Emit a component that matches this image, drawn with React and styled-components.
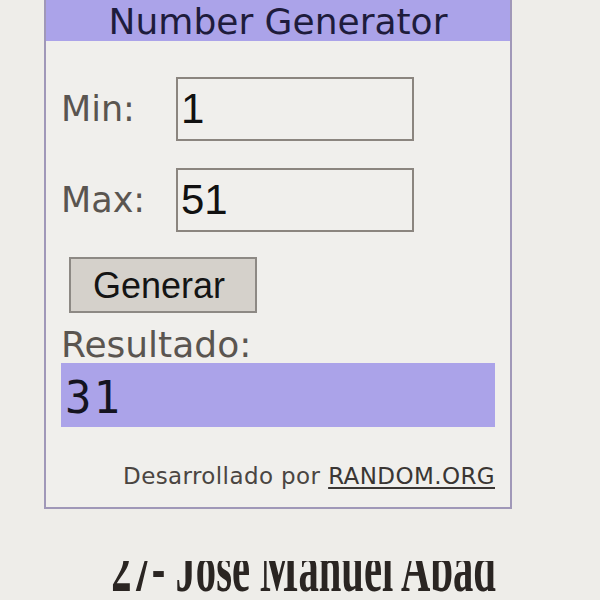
import React from "react";
import styled, { createGlobalStyle } from "styled-components";

const Global = createGlobalStyle`
  html, body {
    margin: 0;
    padding: 0;
    background: #eeede9;
    overflow: hidden;
  }
  * { box-sizing: border-box; }
`;

const Page = styled.div`
  width: 600px;
  height: 600px;
  display: flex;
  flex-direction: column;
`;

const Widget = styled.div`
  margin-left: 44px;
  width: 468px;
  background: #f0efec;
  border: 2px solid #a098b8;
  border-top: none;
  display: flex;
  flex-direction: column;
`;

const Header = styled.div`
  height: 41px;
  padding-top: 2px;
  background: #aba3e9;
  color: #1e1c3c;
  font-family: "DejaVu Sans", sans-serif;
  font-size: 36px;
  line-height: 39px;
  text-align: center;
`;

const Body = styled.div`
  display: flex;
  flex-direction: column;
  padding: 36px 15px 19px;
`;

const FieldRow = styled.div`
  display: flex;
  align-items: center;
  height: 64px;
  margin-top: ${(p) => p.$gap || 0}px;
`;

const Label = styled.span`
  flex: none;
  width: 115px;
  font-family: "DejaVu Sans", sans-serif;
  font-size: ${(p) => p.$size || 35}px;
  color: #5a5550;
`;

const Input = styled.input`
  width: 238px;
  height: 64px;
  border: 2px solid #8b857f;
  background: #f0efec;
  padding: 0 0 0 3px;
  font-family: "Liberation Sans", Arial, sans-serif;
  font-size: 42px;
  color: #111;
  outline: none;
`;

const Button = styled.button`
  align-self: flex-start;
  margin: 25px 0 0 8px;
  width: 188px;
  height: 56px;
  border: 2px solid #8d8984;
  background: #d5d1cb;
  padding: 2px 8px 0 0;
  font-family: "Liberation Sans", Arial, sans-serif;
  font-size: 36px;
  color: #141414;
`;

const ResultLabel = styled.div`
  margin-top: 14px;
  font-family: "DejaVu Sans", sans-serif;
  font-size: 36px;
  line-height: 36px;
  color: #5a5550;
`;

const ResultBox = styled.div`
  height: 64px;
  background: #aba3e9;
  display: flex;
  align-items: center;
  padding: 4px 0 0 4px;
  font-family: "DejaVu Sans Mono", monospace;
  font-size: 44px;
  letter-spacing: 2px;
  color: #141420;
`;

const Credit = styled.div`
  margin-top: 38px;
  text-align: right;
  font-family: "DejaVu Sans", sans-serif;
  font-size: 23px;
  line-height: 23px;
  letter-spacing: 0.4px;
  color: #4a4541;
`;

const CreditLink = styled.a`
  color: #3a3633;
  text-decoration: underline;
  text-underline-offset: 3px;
`;

const Caption = styled.div`
  margin-top: 52px;
  height: 32px;
  overflow: hidden;
  display: flex;
  justify-content: center;
  align-items: flex-end;
`;

const CaptionText = styled.span`
  display: block;
  margin: 0 0 -10px 8px;
  font-family: "Liberation Serif", "Times New Roman", serif;
  font-weight: bold;
  font-size: 70px;
  line-height: 1;
  color: #2a2522;
  white-space: nowrap;
  transform: scaleX(0.58);
`;

export default function App() {
  return (
    <Page>
      <Global />
      <Widget>
        <Header>Number Generator</Header>
        <Body>
          <FieldRow>
            <Label>Min:</Label>
            <Input defaultValue="1" />
          </FieldRow>
          <FieldRow $gap={27}>
            <Label>Max:</Label>
            <Input defaultValue="51" />
          </FieldRow>
          <Button>Generar</Button>
          <ResultLabel>Resultado:</ResultLabel>
          <ResultBox>31</ResultBox>
          <Credit>
            Desarrollado por <CreditLink href="#">RANDOM.ORG</CreditLink>
          </Credit>
        </Body>
      </Widget>
      <Caption>
        <CaptionText>27- Jose Manuel Abad</CaptionText>
      </Caption>
    </Page>
  );
}
